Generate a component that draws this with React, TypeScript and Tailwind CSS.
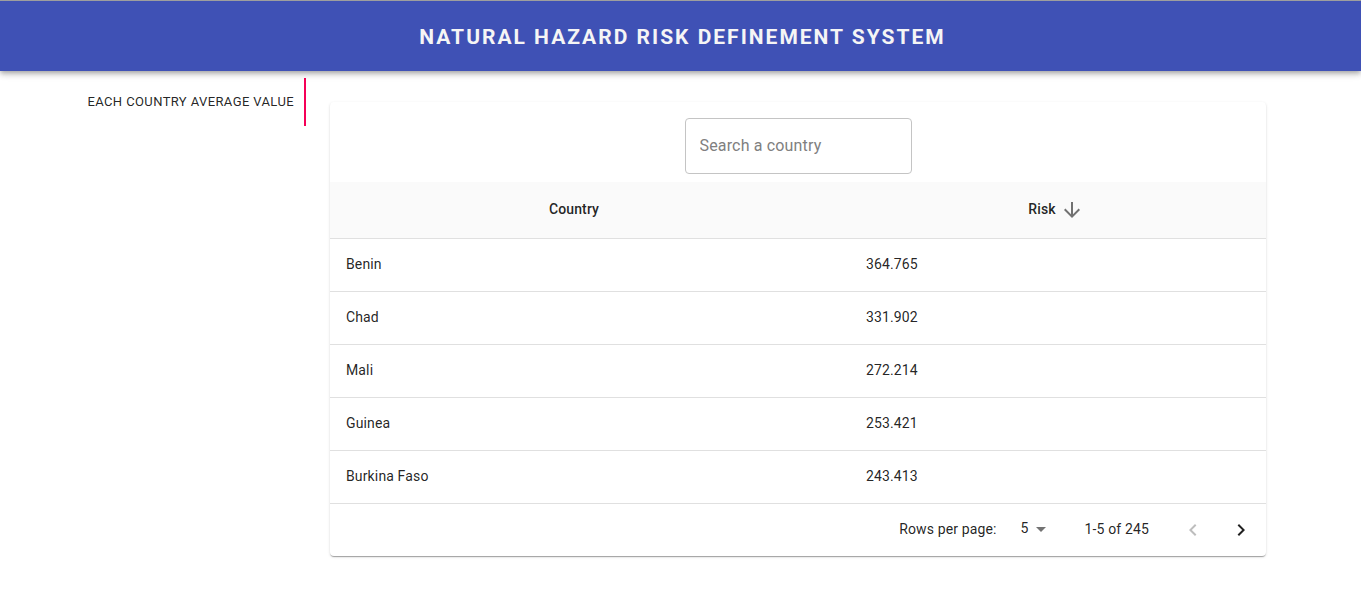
import { useState } from "react";

type Row = { country: string; risk: string };

const rows: Row[] = [
  { country: "Benin", risk: "364.765" },
  { country: "Chad", risk: "331.902" },
  { country: "Mali", risk: "272.214" },
  { country: "Guinea", risk: "253.421" },
  { country: "Burkina Faso", risk: "243.413" },
];

function Icon({ path, className }: { path: string; className?: string }) {
  return (
    <svg viewBox="0 0 24 24" fill="currentColor" aria-hidden="true" className={`size-6 shrink-0 ${className ?? ""}`}>
      <path d={path} />
    </svg>
  );
}

const ARROW_DOWN = "M20 12l-1.41-1.41L13 16.17V4h-2v12.17l-5.58-5.59L4 12l8 8 8-8z";
const CHEVRON_LEFT = "M15.41 7.41L14 6l-6 6 6 6 1.41-1.41L10.83 12z";
const CHEVRON_RIGHT = "M10 6L8.59 7.41 13.17 12l-4.58 4.59L10 18l6-6z";
const CARET = "M7 10l5 5 5-5z";

function SortHeader({ label, active, className }: { label: string; active?: boolean; className?: string }) {
  return (
    <th
      scope="col"
      aria-sort={active ? "descending" : "none"}
      className={`border-b border-[#e0e0e0] bg-[#fafafa] px-4 py-4 font-medium ${className ?? ""}`}
    >
      <button type="button" className="inline-flex h-6 items-center align-top tracking-[0.01em]">
        <span className="pb-0.5">{label}</span>
        <Icon path={ARROW_DOWN} className={`mx-1 text-black/55 ${active ? "" : "opacity-0"}`} />
      </button>
    </th>
  );
}

export default function App() {
  const [search, setSearch] = useState("");
  const [perPage, setPerPage] = useState("5");

  return (
    <div className="min-h-screen bg-white font-[Roboto,sans-serif] text-sm text-black/87">
      <header className="relative flex h-[71px] items-center justify-center border-t border-[#9e9e9e] bg-[#3f51b5] pt-0.5 pr-6 pl-7 shadow-[0_2px_4px_-1px_rgba(0,0,0,0.2),0_4px_5px_0_rgba(0,0,0,0.14),0_1px_10px_0_rgba(0,0,0,0.12)]">
        <h1 className="text-center text-[21px] font-bold tracking-[2px] text-[#f5f5f5] uppercase">
          Natural Hazard Risk Definement System
        </h1>
      </header>

      <div className="flex pt-[7px] pr-[71px] pl-[70px]">
        <nav className="w-[236px] shrink-0" role="tablist" aria-orientation="vertical">
          <button
            type="button"
            role="tab"
            aria-selected="true"
            className="flex h-12 w-full items-center justify-end border-r-2 border-[#f50057] pr-2.5 text-[13px] whitespace-nowrap uppercase tracking-[0.03em]"
          >
            Each country average value
          </button>
        </nav>

        <main className="min-w-0 grow p-6">
          <section className="rounded bg-white shadow-[0_2px_1px_-1px_rgba(0,0,0,0.2),0_1px_1px_0_rgba(0,0,0,0.14),0_1px_3px_0_rgba(0,0,0,0.12)]">
            <div className="flex justify-center px-4 pt-4 pb-2">
              <input
                type="text"
                aria-label="Search a country"
                placeholder="Search a country"
                value={search}
                onChange={(e) => setSearch(e.target.value)}
                className="h-14 w-[227px] rounded border border-[#c4c4c4] px-3.5 pb-0.5 text-base tracking-[0.01em] outline-none placeholder:text-[#808080] focus:border-[#3f51b5]"
              />
            </div>

            <table className="w-full table-fixed border-separate border-spacing-0 tracking-[0.01em]">
              <thead>
                <tr>
                  <SortHeader label="Country" className="w-5/9" />
                  <SortHeader label="Risk" active />
                </tr>
              </thead>
              <tbody>
                {rows.map((row) => (
                  <tr key={row.country}>
                    <td className="border-b border-[#e0e0e0] px-4 pt-[15px] pb-[17px]">{row.country}</td>
                    <td className="border-b border-[#e0e0e0] px-4 pt-[15px] pb-[17px]">{row.risk}</td>
                  </tr>
                ))}
              </tbody>
            </table>

            <div className="flex h-[52px] items-center justify-end pr-px tracking-[0.01em]">
              <label htmlFor="rows-per-page" className="pb-0.5">
                Rows per page:
              </label>
              <div className="relative mr-8 ml-2 flex items-center">
                <select
                  id="rows-per-page"
                  value={perPage}
                  onChange={(e) => setPerPage(e.target.value)}
                  className="h-8 w-12 appearance-none bg-transparent pr-6 pb-1 text-right outline-none [text-align-last:right]"
                >
                  <option value="5">5</option>
                  <option value="10">10</option>
                  <option value="25">25</option>
                </select>
                <Icon path={CARET} className="pointer-events-none absolute right-0 mb-0.5 text-black/55" />
              </div>
              <span className="pb-0.5">1-5 of 245</span>
              <div className="ml-5 flex">
                <button type="button" aria-label="Previous page" disabled className="p-3 text-black/26">
                  <Icon path={CHEVRON_LEFT} />
                </button>
                <button type="button" aria-label="Next page" className="p-3">
                  <Icon path={CHEVRON_RIGHT} />
                </button>
              </div>
            </div>
          </section>
        </main>
      </div>
    </div>
  );
}
